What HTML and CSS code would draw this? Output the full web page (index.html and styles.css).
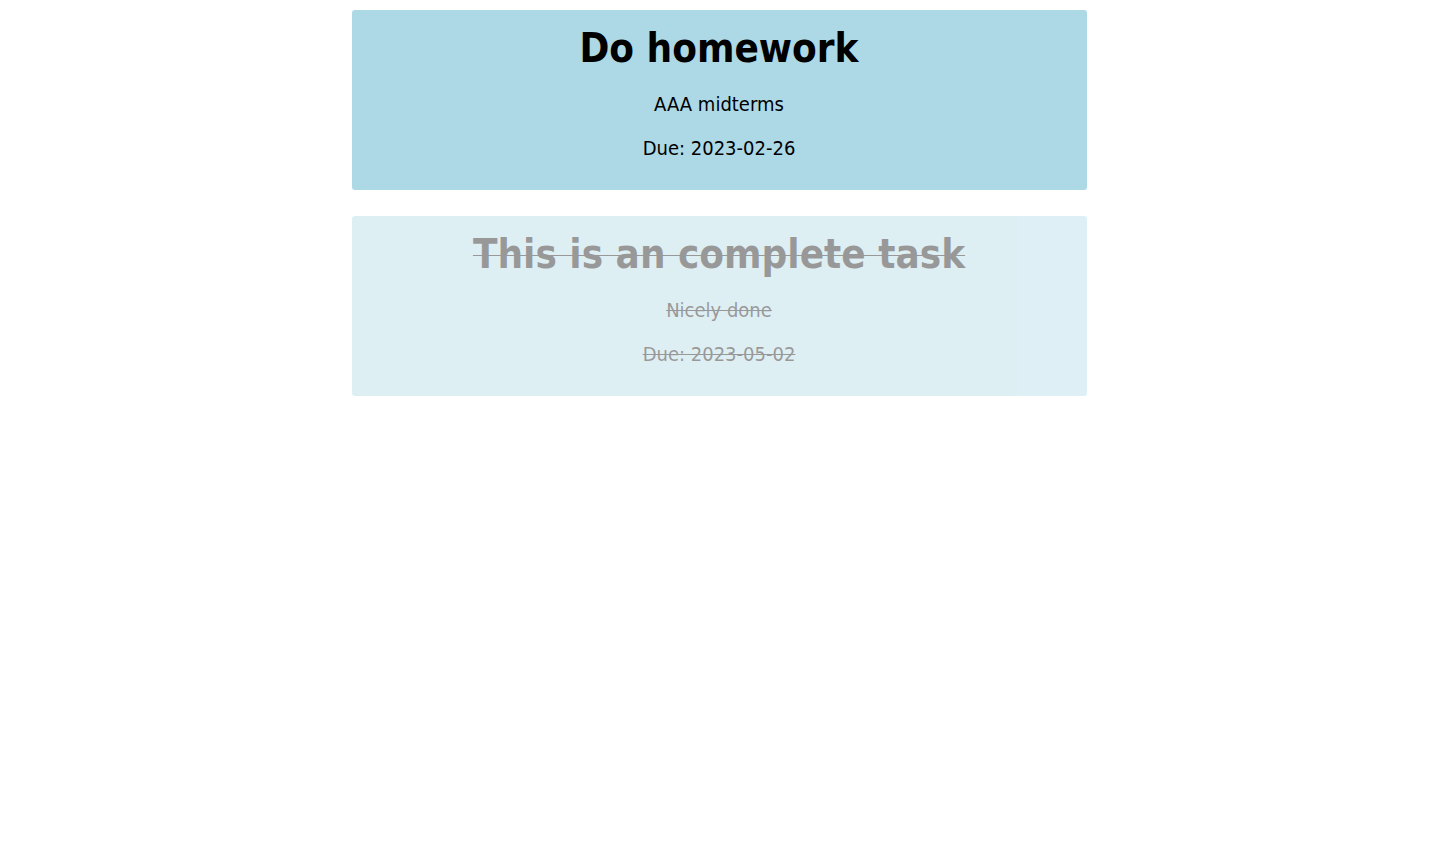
FILE: index.html
```html
<!DOCTYPE html>
<html>
<head>
<meta charset="utf-8">
<title>Tasks</title>
<link rel="stylesheet" href="styles.css">
</head>
<body>
<main class="list">
  <section class="card">
    <h1 class="title">Do homework</h1>
    <p class="text">AAA midterms</p>
    <p class="text">Due: 2023-02-26</p>
  </section>
  <section class="card done">
    <h1 class="title">This is an complete task</h1>
    <p class="text">Nicely done</p>
    <p class="text">Due: 2023-05-02</p>
  </section>
</main>
</body>
</html>
```
FILE: styles.css
```css
html, body {
  margin: 0;
  padding: 0;
  background: #fff;
}
body {
  font-family: "DejaVu Sans Condensed", "DejaVu Sans", sans-serif;
  color: #000;
}
.list {
  width: 735px;
  margin: 0 auto;
  padding-top: 10px;
  display: flex;
  flex-direction: column;
  gap: 26px;
}
.card {
  background: #add8e6;
  border-radius: 3px;
  padding: 14px 12px 10px;
  text-align: center;
}
.title {
  margin: 0 0 20px;
  font-size: 40px;
  line-height: 48px;
  font-weight: bold;
}
.text {
  margin: 0 0 20px;
  font-size: 20px;
  line-height: 24px;
}
.done {
  opacity: 0.4;
}
.done .title,
.done .text {
  text-decoration: line-through;
  text-decoration-thickness: 1px;
}
```
